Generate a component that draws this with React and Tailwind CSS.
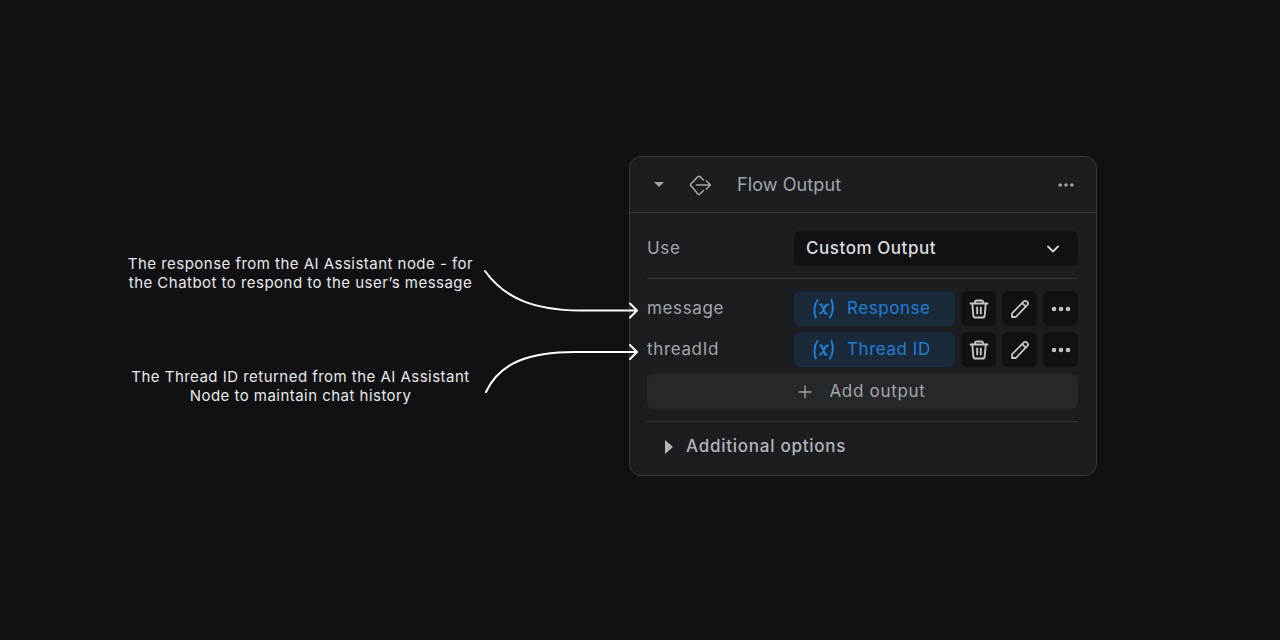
import React from 'react';
import { ChevronDown, Ellipsis, Plus } from 'lucide-react';

const font = { fontFamily: 'Inter, sans-serif' };

const VarIcon = () => (
  <svg width="24" height="22" viewBox="0 0 24 22" fill="none" stroke="#1e7fd6" strokeLinecap="round">
    <path d="M5.500 2C2.200 6.500 1.500 14 3.800 19.500" strokeWidth="2" />
    <path d="M19.500 2C21.800 8 21 15.500 17.800 19.500" strokeWidth="2" />
    <path d="M8 6.500h1.500l3.700 9h1.500M16 6.500c-1.600 0-2.800 1.400-3.700 3.500-1.100 2.800-2.300 5.500-4.500 5.500" strokeWidth="2" />
  </svg>
);

const FlowIcon = () => (
  <svg width="22" height="22" viewBox="0 0 22 22" fill="none" stroke="#a3a5a8" strokeWidth="1.5" strokeLinecap="round" strokeLinejoin="round">
    <path d="M14.500 6 11.300 2.900c-.8-.8-1.800-.8-2.600 0L1.800 10c-.5.500-.5 1.100 0 1.600l6.900 8.200c.8.800 1.800.8 2.600 0l3.200-3.300" />
    <path d="M7.500 11H21.500M17.500 7l4 4-4 4" />
  </svg>
);

const TrashIcon = () => (
  <svg width="20" height="20" viewBox="0 0 20 20" fill="none" stroke="currentColor" strokeWidth="1.9" strokeLinecap="round" strokeLinejoin="round">
    <path d="M1.500 4.500h17M6 4.500V3c0-1 .6-1.500 1.500-1.500h5C13.400 1.500 14 2 14 3v1.500" />
    <path d="M3.300 4.500l1 11.800c.1 1.200.8 2.200 2 2.200h7.400c1.200 0 1.900-1 2-2.200l1-11.800" />
    <path d="M8.200 8.500v6M11.800 8.500v6" />
  </svg>
);

const PencilIcon = () => (
  <svg width="20" height="20" viewBox="0 0 20 20" fill="none" stroke="currentColor" strokeWidth="1.800" strokeLinecap="round" strokeLinejoin="round">
    <path d="M2 18v-3.200c0-.4.100-.7.400-1L13.600 2.600c.9-.9 2.500-.9 3.500.1s1 2.600.1 3.500L6.200 17.600c-.3.300-.6.400-1 .4H2z" />
    <path d="M12.300 4.200l3.500 3.500" />
  </svg>
);

const IconButton = ({ children }) => (
  <button className="w-[35px] h-[35px] rounded-[6px] bg-[#111113] flex items-center justify-center text-[#c4c5c7]">
    {children}
  </button>
);

const OutputRow = ({ name, value }) => (
  <div className="flex items-center h-[35px]">
    <span className="w-[147px] text-[17px] text-[#a3a5a8] tracking-[0.65px]">{name}</span>
    <div className="w-[161px] h-[35px] rounded-[6px] bg-[#1b2a3a] flex items-center pl-[18px] gap-[11px]">
      <VarIcon />
      <span className="text-[17px] text-[#1e7fd6] tracking-[0.55px]">{value}</span>
    </div>
    <div className="ml-[6px] flex gap-[6px]">
      <IconButton><TrashIcon /></IconButton>
      <IconButton><PencilIcon /></IconButton>
      <IconButton><Ellipsis size={24} strokeWidth={2.6} /></IconButton>
    </div>
  </div>
);

export default function App() {
  return (
    <div className="relative w-[1280px] h-[640px] bg-[#111113] flex items-start overflow-hidden" style={font}>
      {/* captions */}
      <div className="w-[361px] ml-[120px] mt-[254px] flex flex-col gap-[74px] text-center text-[15px] leading-[19px] tracking-[0.47px] text-[#e8e8e9]">
        <p>The response from the AI Assistant node - for<br />the Chatbot to respond to the user’s message</p>
        <p className="mt-px">The Thread ID returned from the AI Assistant<br />Node to maintain chat history</p>
      </div>

      {/* node card */}
      <div className="ml-[148px] mt-[156px] w-[468px] h-[320px] rounded-[12px] border border-[#36383b] bg-[#1c1d21]">
        <div className="h-[56px] border-b border-[#36383b] flex items-center pl-[24px] pr-[20px]">
          <span className="w-0 h-0 border-x-[5px] border-x-transparent border-t-[5px] border-t-[#a3a5a8]" />
          <span className="ml-[25px] flex"><FlowIcon /></span>
          <span className="ml-[26px] text-[18px] text-[#a3a5a8] tracking-[0.1px]">Flow Output</span>
          <Ellipsis size={20} strokeWidth={2.4} className="ml-auto text-[#a3a5a8]" />
        </div>

        <div className="pl-[17px] pr-[18px] pt-[18px]">
          <div className="flex items-center h-[35px]">
            <span className="w-[147px] text-[17px] text-[#a3a5a8] tracking-[0.65px]">Use</span>
            <div className="flex-1 h-[35px] rounded-[6px] bg-[#111113] flex items-center justify-between pl-[12px] pr-[15px]">
              <span className="text-[17px] font-[450] text-[#dcdcde] tracking-[0.55px]">Custom Output</span>
              <ChevronDown size={20} strokeWidth={2.2} className="text-[#d4d5d6]" />
            </div>
          </div>
          <div className="h-px bg-[#36383b] mt-[12px] mb-[12px]" />
          <div className="flex flex-col gap-[6px]">
            <OutputRow name="message" value="Response" />
            <OutputRow name="threadId" value="Thread ID" />
          </div>
          <button className="mt-[7px] w-full h-[35px] rounded-[6px] bg-[#25292c] flex items-center justify-center gap-[14px] pr-[4px] pt-px text-[#a3a5a8]">
            <Plus size={20} strokeWidth={1.6} />
            <span className="text-[17px] tracking-[0.7px]">Add output</span>
          </button>
          <div className="h-px bg-[#36383b] mt-[12px]" />
          <div className="flex items-center h-[49px] pl-[18px] gap-[13px] text-[#b4b5b7]">
            <span className="w-0 h-0 border-y-[7px] border-y-transparent border-l-[8px] border-l-[#b4b5b7]" />
            <span className="text-[17px] font-[450] tracking-[0.75px]">Additional options</span>
          </div>
        </div>
      </div>

      {/* arrows lie over the card edge */}
      <svg className="absolute left-0 top-0 pointer-events-none" width="1280" height="640" fill="none" stroke="#ffffff" strokeWidth="2" strokeLinecap="round" strokeLinejoin="round">
        <path d="M485 271C505 299 535 310 580 310.500H636" />
        <path d="M630 303.500 637 310.500 630 317.500" />
        <path d="M486 392C500 362 530 352 575 352H636" />
        <path d="M630 345 637 352 630 359" />
      </svg>
    </div>
  );
}
